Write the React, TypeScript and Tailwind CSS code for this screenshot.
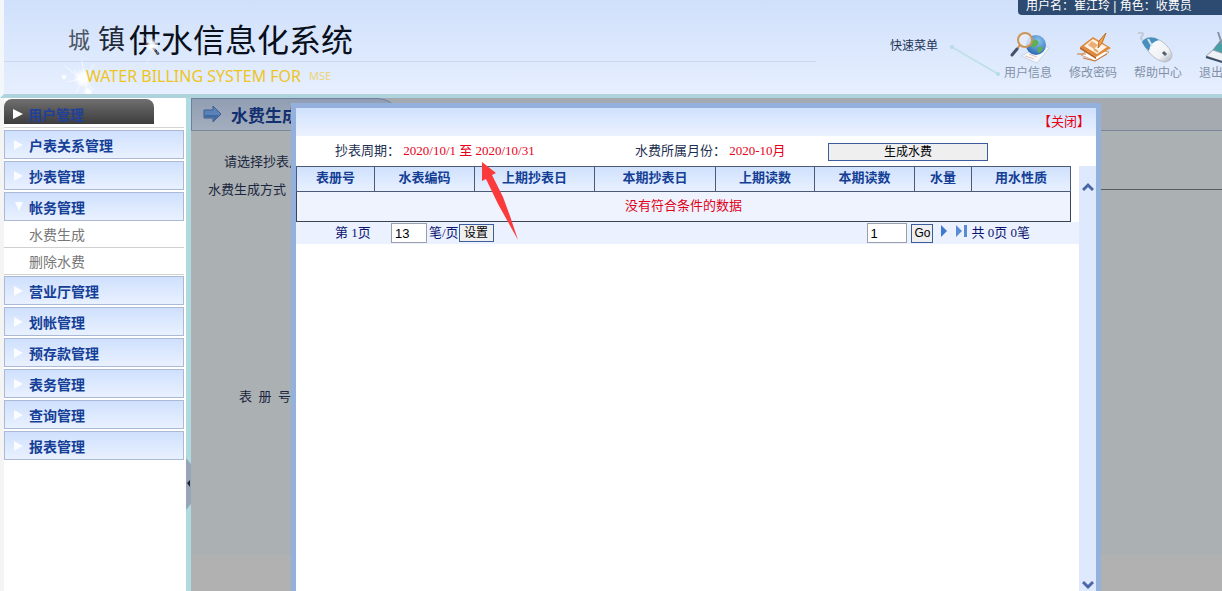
import { useState } from "react";

const sansCjk = "font-['Liberation_Sans','Noto_Sans_CJK_SC',sans-serif]";
const serifCjk = "font-['Liberation_Serif','Noto_Sans_CJK_SC',serif]";

const menuTop = ["户表关系管理", "抄表管理"];
const subMenu = ["水费生成", "删除水费"];
const menuBottom = [
  "营业厅管理",
  "划帐管理",
  "预存款管理",
  "表务管理",
  "查询管理",
  "报表管理",
];

const columns = [
  { title: "表册号", width: "w-[78px]" },
  { title: "水表编码", width: "w-[100px]" },
  { title: "上期抄表日", width: "w-[120px]" },
  { title: "本期抄表日", width: "w-[121px]" },
  { title: "上期读数", width: "w-[99px]" },
  { title: "本期读数", width: "w-[100px]" },
  { title: "水量", width: "w-[57px]" },
  { title: "用水性质", width: "w-[99px]" },
];

const UserInfoIcon = () => (
  <svg className="h-8 w-12" viewBox="0 0 48 32">
    <defs>
      <radialGradient id="globe" cx=".6" cy=".3" r=".8">
        <stop offset="0" stopColor="#8cc4ee" />
        <stop offset="1" stopColor="#1f5fae" />
      </radialGradient>
    </defs>
    <path d="M17 24 38 13 45 16 33 31Z" fill="#f6f8fc" stroke="#ced6e4" />
    <path d="m21 24 9 3M25 22l8 3" stroke="#e2c3b8" fill="none" />
    <circle cx="32" cy="13" r="10" fill="url(#globe)" />
    <path d="M28 9q4-3 6 0t-2 5q-4 3-5 0zM34 15q4-1 5 1-1 4-4 5-3-2-1-6z" fill="#5fae5a" />
    <circle cx="21" cy="8" r="7" fill="#e6eefb" fillOpacity=".8" stroke="#cf9356" strokeWidth="2" />
    <path d="m16 13-3 4" stroke="#cf9356" strokeWidth="2" />
    <path d="m13 17-5 6" stroke="#45526a" strokeWidth="3" strokeLinecap="round" />
  </svg>
);

const PasswordIcon = () => (
  <svg className="h-8 w-12" viewBox="0 0 48 32">
    <path d="M12 23 22 16 40 20 26 29Z" fill="#fff" stroke="#d3a57c" />
    <path d="M11 15 24 5 42 16 27 25Z" fill="#e08a3a" />
    <path d="m11 15 16 10v2L11 17Z" fill="#b4601c" />
    <path d="M15 14 24 7 38 15 28 22Z" fill="#fdf3e8" />
    <path d="m19 13 4-4 6 4-4 4Z" fill="#ecae74" />
    <path d="m25 17 4 3" stroke="#e3a364" strokeWidth="2" />
    <path d="m37 1-4 10-4 5 1-7z" fill="#f0a14d" stroke="#c46d22" />
    <path d="M8 22h9M14 26l12 3 12-7" fill="none" stroke="#c8783a" />
  </svg>
);

const HelpIcon = () => (
  <svg className="h-8 w-12" viewBox="0 0 48 32">
    <defs>
      <linearGradient id="mouse" x1="0" y1="0" x2="1" y2="1">
        <stop offset="0" stopColor="#fff" />
        <stop offset=".7" stopColor="#f0f1f4" />
        <stop offset="1" stopColor="#a6adba" />
      </linearGradient>
    </defs>
    <path d="M10 9Q5 7 8 4T7 1L4 1" fill="none" stroke="#c3cbd8" strokeWidth="2" />
    <path d="M8 10Q12 4 21 6 34 11 38 22q0 8-8 8Q18 28 8 10Z" fill="url(#mouse)" stroke="#b9bfcb" />
    <path d="M8 10Q12 4 21 6l4 2q-9 2-10 11Q10 15 8 10Z" fill="#4590c0" />
    <path d="m14 7 4 7" stroke="#cfe6f3" strokeWidth="2" />
    <path d="m29 20 3 3" stroke="#55606f" strokeWidth="3" />
  </svg>
);

const LogoutIcon = () => (
  <svg className="h-8 w-12" viewBox="0 0 48 32">
    <path d="m14 18 8-10 20 5-8 15Z" fill="#46a0a5" stroke="#7c8b99" />
    <path d="m7 24 7-6 20 7-6 6Z" fill="#eef1f6" stroke="#96a1b2" />
    <path d="m7 25 19 6" fill="none" stroke="#3d4f66" strokeWidth="2" />
    <path d="m19 0 4 12" stroke="#8793a6" strokeWidth="2" />
  </svg>
);

const quickLinks = [
  { label: "用户信息", Icon: UserInfoIcon },
  { label: "修改密码", Icon: PasswordIcon },
  { label: "帮助中心", Icon: HelpIcon },
  { label: "退出系统", Icon: LogoutIcon },
];

const Sparkles = () => (
  <svg className="pointer-events-none absolute left-[56px] top-7 h-[70px] w-[120px]" viewBox="0 0 120 70">
    <defs>
      <radialGradient id="glow">
        <stop offset="0" stopColor="#fff" />
        <stop offset=".4" stopColor="#fff" stopOpacity=".9" />
        <stop offset="1" stopColor="#fff" stopOpacity="0" />
      </radialGradient>
    </defs>
    <g stroke="#fff" strokeLinecap="round" opacity=".7">
      <path d="M5 38 34 62M22 33l6 34M34 36 16 64M8 54l30-8M14 42l18 26" />
      <path d="m84 8 14 18M102 8 86 36M96 6l2 22" opacity=".6" />
    </g>
    <circle cx="23" cy="50" r="10" fill="url(#glow)" />
    <circle cx="28" cy="64" r="5" fill="url(#glow)" />
    <circle cx="4" cy="49" r="3" fill="url(#glow)" />
    <circle cx="92" cy="17" r="7" fill="url(#glow)" />
  </svg>
);

const Header = () => (
  <header className="relative flex h-[98px] shrink-0 overflow-hidden border-b-4 border-l-4 border-b-[#aed3dd] border-l-[#f4f7fa] bg-gradient-to-b from-[#d0e0fb] to-[#e6effe]">
    <div className="absolute left-0 top-[61px] h-px w-2/3 bg-[#c9d8ec]" />
    <div className="pl-16 pt-[18px]">
      <h1 className="flex h-10 items-center font-['Noto_Sans_CJK_SC',sans-serif] text-[32px] leading-10 text-[#0a0f1c]">
        <span className="mr-2 text-[22px] text-[#4b5563]">城</span>
        <span className="mr-1 text-[27px] text-[#1f2937]">镇</span>
        供水信息化系统
      </h1>
      <p className="relative z-10 flex items-center gap-2 pl-[18px] pt-[6px] font-['Noto_Sans',sans-serif] text-[16px] leading-6 text-[#efc51d]">
        WATER BILLING SYSTEM FOR
        <span className="text-[11px] text-[#ecd479]">MSE</span>
      </p>
    </div>
    <Sparkles />
    <div className={`ml-auto flex flex-col text-[12px] ${sansCjk}`}>
      <div className="h-[15px] w-[204px] self-end rounded-bl bg-[#2d4a70] pl-2 leading-[12px] text-white">
        用户名：崔江玲 | 角色：收费员
      </div>
      <nav className="-mr-[25px] flex">
        <span className="mt-[21px] h-5 leading-5 text-[#1d3557]">快速菜单</span>
        <svg className="ml-2 mt-7 h-10 w-[58px]" viewBox="0 0 58 40">
          <path d="M6 4 52 31" stroke="#bfe0ea" strokeWidth="2" />
          <circle cx="6" cy="4" r="2" fill="#b4dce6" />
          <circle cx="52" cy="31" r="2" fill="#b4dce6" />
        </svg>
        <div className="flex gap-[17px] pt-[17px]">
          {quickLinks.map(({ label, Icon }) => (
            <a key={label} href="#" className="flex w-12 flex-col items-center whitespace-nowrap text-[#8391a8]">
              <Icon />
              <span className="leading-[18px]">{label}</span>
            </a>
          ))}
        </div>
      </nav>
    </div>
  </header>
);

const MenuItem = ({ label, open = false }: { label: string; open?: boolean }) => (
  <button className="mb-[2px] flex h-[29px] w-full items-center border border-[#a9b9d6] bg-gradient-to-b from-[#cfe0fd] to-[#e9f1ff] pl-2 text-[14px] font-bold text-[#153f96]">
    <svg className="mr-1 h-3 w-3 shrink-0" viewBox="0 0 12 12">
      <path d={open ? "M2 1h8L6 10Z" : "M1 1 10 6 1 11Z"} fill="#fff" opacity=".85" />
    </svg>
    <span className="pt-[3px]">{label}</span>
  </button>
);

const Sidebar = () => (
  <aside className={`w-[186px] shrink-0 border-l-4 border-[#f4f4f4] bg-white pr-[2px] pt-px ${sansCjk}`}>
    <div className="mb-[2px] border-b border-[#d4d4d4] pb-[3px]">
      <button className="flex h-[25px] w-[150px] items-center rounded-t-lg bg-gradient-to-b from-[#707070] to-[#3d3d3d] pl-2 pt-1 text-[14px] font-bold text-[#21409a]">
        <svg className="mr-1 h-3 w-3 shrink-0" viewBox="0 0 12 12">
          <path d="M1 1 11 6 1 11Z" fill="#fff" />
        </svg>
        <span className="pt-[3px]">用户管理</span>
      </button>
    </div>
    {menuTop.map((label) => (
      <MenuItem key={label} label={label} />
    ))}
    <MenuItem label="帐务管理" open />
    <ul className="-mt-[2px] mb-px">
      {subMenu.map((label) => (
        <li key={label} className="h-[27px] border-b border-[#d0d0d0] pl-[25px] text-[14px] leading-7 text-[#777]">
          <a href="#">{label}</a>
        </li>
      ))}
    </ul>
    {menuBottom.map((label) => (
      <MenuItem key={label} label={label} />
    ))}
  </aside>
);

const Divider = () => (
  <div className="relative w-[5px] shrink-0 bg-[#aedae0]">
    <button aria-label="收起菜单" className="absolute left-0 top-[360px] block h-[52px] w-[5px]">
      <svg className="h-full w-full" viewBox="0 0 5 52">
        <path d="M0 0 5 6V46L0 52Z" fill="#98a5b8" />
        <path d="M4 22v7L1 25Z" fill="#1c2430" />
      </svg>
    </button>
  </div>
);

const DataTable = () => (
  <table className="w-[calc(100%-8px)] table-fixed border-collapse text-[13px]">
    <thead>
      <tr className="h-[25px] bg-gradient-to-b from-[#d0e1fd] to-[#e9f1ff] text-[#143f95]">
        {columns.map((col) => (
          <th key={col.title} className={`border border-[#4a5a78] px-0 pb-[2px] pt-0 leading-5 ${col.width}`}>
            {col.title}
          </th>
        ))}
      </tr>
    </thead>
    <tbody>
      <tr className="h-[30px] bg-[#eef3fd]">
        <td colSpan={columns.length} className="border border-[#3c4454] px-0 pb-[2px] pt-0 text-center leading-5 text-[#e0001b]">
          没有符合条件的数据
        </td>
      </tr>
    </tbody>
  </table>
);

const Pager = () => {
  const [pageSize, setPageSize] = useState("13");
  const [page, setPage] = useState("1");

  return (
    <div className="flex h-[22px] items-center bg-[#ebf1fe] pl-[39px] pr-[49px] text-[13px] text-[#0a1470]">
      <span className="w-14">第 1页</span>
      <input
        aria-label="每页笔数"
        value={pageSize}
        onChange={(e) => setPageSize(e.target.value)}
        className={`mr-[2px] h-5 w-9 border border-[#9aa0a8] bg-white px-[3px] text-black ${sansCjk}`}
      />
      <span>笔/页</span>
      <button className={`h-[18px] w-[35px] border border-[#3c5c9c] bg-[#efefef] text-[12px] leading-4 text-black ${sansCjk}`}>
        设置
      </button>
      <input
        aria-label="页码"
        value={page}
        onChange={(e) => setPage(e.target.value)}
        className={`ml-auto mr-1 h-5 w-10 border border-[#9aa0a8] bg-white px-[2px] text-black ${sansCjk}`}
      />
      <button className={`mr-[7px] h-[19px] w-[22px] border border-[#3c5c9c] bg-[#efefef] text-[12px] leading-4 text-black ${sansCjk}`}>
        Go
      </button>
      <button aria-label="下一页" className="mb-1 mr-2">
        <svg className="h-3 w-2" viewBox="0 0 8 12">
          <path d="M1 0 7 6 1 12Z" fill="#3f78cf" />
        </svg>
      </button>
      <button aria-label="末页" className="mb-1 mr-[3px]">
        <svg className="h-3 w-3" viewBox="0 0 12 12">
          <path d="M0 0 6 6 0 12ZM8 0h3v12H8Z" fill="#5b8ad6" />
        </svg>
      </button>
      <span>共 0页 0笔</span>
    </div>
  );
};

const Dialog = () => (
  <section
    role="dialog"
    aria-label="水费生成"
    className={`absolute bottom-0 left-[100px] right-[121px] top-[5px] flex flex-col border-x-[5px] border-t-[5px] border-[#94b1de] bg-white text-[13px] ${serifCjk}`}
  >
    <div className="flex h-7 shrink-0 items-center justify-end bg-gradient-to-b from-[#d0e1fd] to-[#ebf2ff] pr-[6px]">
      <button className="text-[#e60012]">【关闭】</button>
    </div>
    <div className="grid h-[30px] shrink-0 grid-cols-[300px_193px_160px] items-center pl-[39px] text-[#1d2f50]">
      <p>
        抄表周期： <span className="text-[#e8001a]">2020/10/1 至 2020/10/31</span>
      </p>
      <p>
        水费所属月份： <span className="text-[#e8001a]">2020-10月</span>
      </p>
      <button className={`mt-[2px] h-[18px] border border-[#3c5c9c] bg-[#efefef] text-[12px] leading-4 text-black ${sansCjk}`}>
        生成水费
      </button>
    </div>
    <div className="flex min-h-0 flex-1">
      <div className="min-w-0 flex-1">
        <DataTable />
        <Pager />
      </div>
      <div className="flex w-[17px] shrink-0 flex-col items-center justify-between bg-[#dfe9fd] pt-4">
        <svg className="h-3 w-3" viewBox="0 0 12 12">
          <path d="M1 8 6 3 11 8" fill="none" stroke="#4a66a8" strokeWidth="3" />
        </svg>
        <svg className="h-3 w-3" viewBox="0 0 12 12">
          <path d="M1 3 6 8 11 3" fill="none" stroke="#4a66a8" strokeWidth="3" />
        </svg>
      </div>
    </div>
    <svg className="pointer-events-none absolute left-[184px] top-[52px] h-20 w-10" viewBox="0 0 40 80">
      <path d="M2 2 16 13 12 15 23 37 30 56 38 80 18 44 6 19 2 21Z" fill="#fb3b3b" />
    </svg>
  </section>
);

const Content = () => (
  <main className={`relative flex-1 bg-[#abb0b3] text-[13px] text-[#1b2740] ${serifCjk}`}>
    <div className="flex h-[33px] items-center border-b border-[#7b8696] bg-[#a5aab0]">
      <h2 className="flex h-full w-[210px] items-center gap-2 rounded-tr-3xl border-l border-t border-[#6f7f9c] bg-gradient-to-b from-[#919eb3] to-[#a3adbd] pl-[11px] text-[17px] font-bold text-[#12306f]">
        <svg className="h-5 w-5" viewBox="0 0 20 20">
          <path d="M1 5h9V1l8 8-8 8v-4H1Z" fill="#5b82b8" stroke="#3c5d8f" />
          <path d="M2 10h14l-5 5v-3H2Z" fill="#3f689f" />
        </svg>
        <span className="pt-1">水费生成</span>
      </h2>
    </div>
    <div className="flex h-[59px] pt-[21px]">
      <p className="whitespace-nowrap pl-[33px] leading-5">请选择抄表月</p>
      <div className="flex-1 border-b border-[#565c66]" />
    </div>
    <p className="-mt-[10px] w-[95px] text-right leading-5">水费生成方式</p>
    <p className="pl-12 pt-[187px] leading-5">表&nbsp;&nbsp;册&nbsp;&nbsp;号</p>
    <div className="absolute inset-x-0 bottom-0 h-9 bg-[#b1b1b1]" />
    <Dialog />
  </main>
);

const App = () => {
  return (
    <div className="flex h-screen flex-col overflow-hidden">
      <Header />
      <div className="flex min-h-0 flex-1">
        <Sidebar />
        <Divider />
        <Content />
      </div>
    </div>
  );
};

export default App;
